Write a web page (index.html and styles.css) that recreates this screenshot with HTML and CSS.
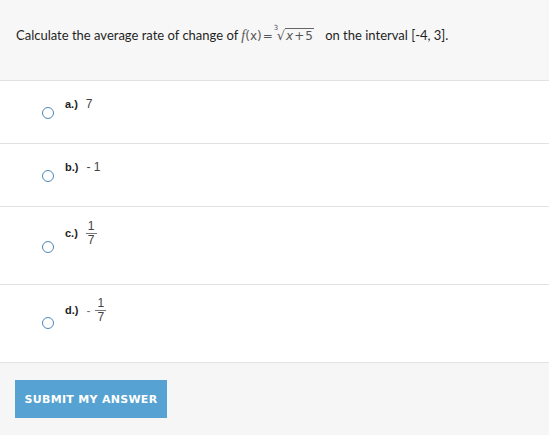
FILE: index.html
```html
<!DOCTYPE html>
<html>
<head>
<meta charset="utf-8">
<link rel="stylesheet" href="styles.css">
</head>
<body>
<div class="question">
  <p class="prompt">Calculate the average rate of change of <span class="math"><i class="fn">f</i>(<span class="var">x</span>)<span class="eq">=</span><span class="root"><span class="idx">3</span><span class="rad">√</span><span class="radicand"><span class="var">x</span><span class="op">+</span>5</span></span></span> on the interval [-4, 3].</p>
</div>
<ul class="options">
  <li class="option opt-a"><span class="radio"></span><span class="label">a.)</span><span class="val">7</span></li>
  <li class="option opt-b"><span class="radio"></span><span class="label">b.)</span><span class="val">- 1</span></li>
  <li class="option opt-c tall"><span class="radio"></span><span class="label">c.)</span><span class="val"><span class="frac"><span class="num">1</span><span class="den">7</span></span></span></li>
  <li class="option opt-d tall"><span class="radio"></span><span class="label">d.)</span><span class="val"><span class="neg">-</span><span class="frac"><span class="num">1</span><span class="den">7</span></span></span></li>
</ul>
<div class="footer">
  <button class="submit">SUBMIT MY ANSWER</button>
</div>
</body>
</html>
```
FILE: styles.css
```css
html, body {
  margin: 0;
  padding: 0;
  background: #ffffff;
}
body {
  font-family: "Lato", "Liberation Sans", sans-serif;
  color: #222;
}
.question {
  background: #f7f7f7;
  height: 80px;
  border-bottom: 1px solid #e2e2e2;
  display: flex;
  align-items: center;
  padding: 0 16px;
}
.prompt {
  margin: 0;
  font-size: 13px;
  color: #1f1f1f;
  position: relative;
  top: -5px;
}
.math {
  font-family: "DejaVu Sans", sans-serif;
  color: #555;
  font-size: 12px;
  margin-right: 8px;
}
.fn {
  font-family: "Liberation Serif", serif;
  font-size: 14px;
}
.eq { margin: 0 1px; }
.root { position: relative; display: inline-block; padding-left: 3px; }
.idx {
  position: absolute;
  left: 0;
  top: -3px;
  font-size: 7px;
  line-height: 7px;
}
.rad { font-size: 13px; }
.radicand {
  border-top: 1px solid #666;
  padding: 0 1px;
}
.radicand .var { font-style: italic; }
.op { margin: 0 1px; }
.options {
  list-style: none;
  margin: 0;
  padding: 0;
}
.option {
  display: flex;
  align-items: flex-start;
  height: 63px;
  border-bottom: 1px solid #e2e2e2;
  padding-left: 42px;
  box-sizing: border-box;
}
.option.tall { height: 78px; }
.radio {
  width: 10px;
  height: 10px;
  border: 1.5px solid #4f86bb;
  border-radius: 50%;
  flex: none;
  margin-right: 11px;
}
.opt-a .radio { margin-top: 26px; }
.opt-b .radio { margin-top: 26px; }
.opt-c .radio { margin-top: 34px; }
.opt-d .radio { margin-top: 32px; }
.label {
  font-family: "Liberation Sans", sans-serif;
  font-weight: bold;
  font-size: 11px;
  color: #222;
  margin-right: 8px;
}
.opt-a .label, .opt-b .label { margin-top: 17px; }
.opt-c .label { margin-top: 20px; }
.opt-d .label { margin-top: 19px; }
.val {
  font-family: "Liberation Sans", sans-serif;
  font-size: 12px;
  color: #444;
  display: flex;
  align-items: center;
}
.opt-a .val, .opt-b .val { margin-top: 16px; }
.opt-c .val { margin-top: 14px; }
.opt-d .val { margin-top: 13px; }
.neg { margin-right: 5px; color: #777; }
.frac {
  display: inline-flex;
  flex-direction: column;
  align-items: center;
  line-height: 11px;
}
.num {
  border-bottom: 1px solid #777;
  padding: 0 2px 1px;
}
.den { padding-top: 1px; }
.footer {
  background: #f6f6f6;
  padding: 17px 15px 17px;
  height: 73px;
  box-sizing: border-box;
}
.submit {
  background: #56a2d2;
  border: none;
  color: #fff;
  font-family: "DejaVu Sans", sans-serif;
  font-weight: bold;
  font-size: 11px;
  width: 152px;
  height: 38px;
  padding: 0;
  letter-spacing: 0.3px;
}
```
